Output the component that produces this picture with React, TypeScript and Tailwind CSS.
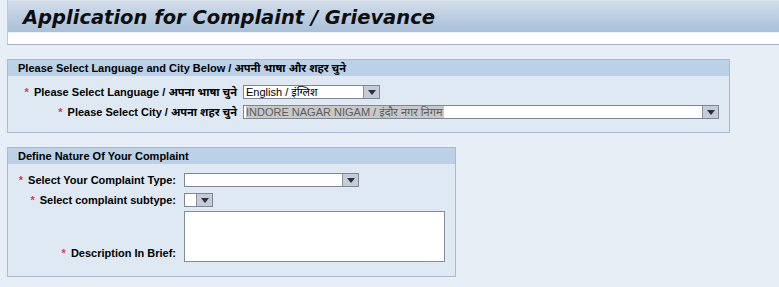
import type { ReactNode } from "react";

const font = { fontFamily: '"Liberation Sans", Arial, "Noto Sans", sans-serif' };

function Arrow() {
  return (
    <span className="flex h-full w-[16px] shrink-0 items-center justify-center border-l border-[#8a929e] bg-[#c5ccd6]">
      <svg width="8" height="5" viewBox="0 0 8 5">
        <path d="M0 0 H8 L4 5 Z" fill="#26303f" />
      </svg>
    </span>
  );
}

function Select({ width, children }: { width: string; children?: ReactNode }) {
  return (
    <div className={`flex h-[14px] items-stretch border border-[#7f8793] bg-white ${width}`}>
      <div className="flex min-w-0 flex-1 items-center overflow-hidden whitespace-nowrap pl-[2px] text-[11px] font-normal leading-none text-black">
        {children}
      </div>
      <Arrow />
    </div>
  );
}

function Req() {
  return <span className="mr-[5px] text-[#d33b5a]">*</span>;
}

function Section({ title, width, children }: { title: string; width: string; children: ReactNode }) {
  return (
    <div className={`ml-[7px] border border-[#a5bbd3] bg-[#dfe9f4] ${width}`}>
      <div className="h-[16px] bg-[#bad1e7] pl-[10px] text-[11px] font-bold leading-[16px] text-black">
        {title}
      </div>
      {children}
    </div>
  );
}

export default function App() {
  return (
    <div className="min-h-screen w-full bg-[#e8eef5] text-black" style={font}>
      {/* page header */}
      <div className="ml-[7px] border-b border-l border-[#a7b2c2] border-l-[#bcc8d6]">
        <div className="flex h-[32px] items-center border-t border-[#dae3ec] bg-gradient-to-b from-[#d2dde9] to-[#a8c0d9] pl-[15px] pt-[2px]">
          <h1
            className="text-[19.5px] font-bold italic leading-none text-[#0d0d0d]"
            style={{ fontFamily: '"DejaVu Sans", Verdana, sans-serif' }}
          >
            Application for Complaint / Grievance
          </h1>
        </div>
        <div className="h-[12px] border-t border-[#eef2f7] bg-white" />
      </div>

      <div className="mt-[14px]">
        <Section title="Please Select Language and City Below / अपनी भाषा और शहर चुने" width="w-[723px]">
          <div className="grid grid-cols-[229px_1fr] gap-x-[6px] gap-y-[6px] pb-[13px] pt-[9px] text-[11px] font-bold">
            <div className="flex h-[14px] items-center justify-end whitespace-nowrap">
              <Req />
              Please Select Language / अपना भाषा चुने
            </div>
            <Select width="w-[137px]">English / इंग्लिश</Select>
            <div className="flex h-[14px] items-center justify-end whitespace-nowrap">
              <Req />
              Please Select City / अपना शहर चुने
            </div>
            <Select width="w-[476px]">
              <span className="flex h-full items-center bg-[#c8c8c8] pr-[2px] text-[#5c5c5c]">
                INDORE NAGAR NIGAM / इंदौर नगर निगम
              </span>
            </Select>
          </div>
        </Section>
      </div>

      <div className="mt-[14px]">
        <Section title="Define Nature Of Your Complaint" width="w-[449px]">
          <div className="grid grid-cols-[168px_1fr] gap-x-[8px] pb-[14px] pt-[9px] text-[11px] font-bold">
            <div className="flex h-[14px] items-center justify-end whitespace-nowrap">
              <Req />
              Select Your Complaint Type:
            </div>
            <Select width="w-[175px]" />
            <div className="mt-[6px] flex h-[14px] items-center justify-end whitespace-nowrap">
              <Req />
              Select complaint subtype:
            </div>
            <div className="mt-[6px]">
              <Select width="w-[29px]" />
            </div>
            <div className="mt-[4px] flex items-end justify-end whitespace-nowrap pb-[1px]">
              <Req />
              Description In Brief:
            </div>
            <div className="mt-[4px]">
              <textarea className="block h-[51px] w-[261px] resize-none border border-[#848c98] bg-white outline-none" />
            </div>
          </div>
        </Section>
      </div>
    </div>
  );
}
